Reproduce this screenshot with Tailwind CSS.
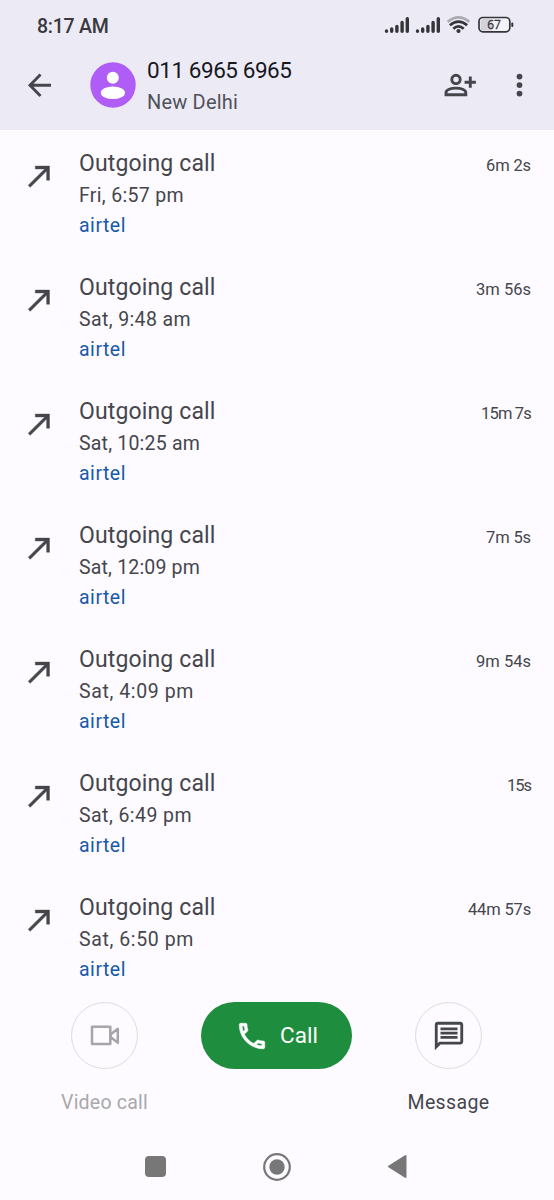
<!DOCTYPE html>
<html lang="en"><head><meta charset="utf-8"><meta name="viewport" content="width=device-width"><title>Call history</title>
<script src="https://cdn.jsdelivr.net/npm/@tailwindcss/browser@4"></script></head>
<body class="w-[554px] h-[1200px] overflow-hidden bg-[#fdfbff] font-['Roboto',sans-serif] text-[#45464c] flex flex-col">
<header class="h-[130px] shrink-0 bg-[#ecebf5] flex flex-col">
  <div class="h-[50px] flex items-center justify-between pl-[37px] pr-[40px]">
    <span class="mt-[3px] text-[19.5px] leading-6 text-[#38383e] font-medium whitespace-nowrap" data-w="71.500">8:17 AM</span>
    <svg class="w-[130px] h-[20px]" viewBox="384 15 130 20" fill="none">
      <g stroke="#34343b" stroke-width="3.4" stroke-linecap="round"><path d="M386.500 31v.3M391.700 29v2.300M396.900 26.500v4.800M402.100 22.500v8.800M407.300 18.800v12.500M417.500 31v.3M422.700 29v2.300M427.900 26.500v4.800M433.100 22.500v8.800M438.300 18.800v12.500"/></g>
      <g stroke-width="2.700"><path stroke="#aaa9b2" d="M447.700 21.900q10.800-9 21.600 0"/><path stroke="#34343b" d="M449.900 25.300q8.600-7.500 17.200 0M453.300 28.700q5.200-4.600 10.400 0"/></g><circle cx="458.500" cy="31" r="2.100" fill="#34343b"/>
      <rect x="479" y="17.500" width="30.800" height="14.300" rx="4" fill="#f4f4f8" stroke="#34343b" stroke-width="1.700"/><path fill="#d3d2d9" d="M483 19h9.500v11.400H483q-2.500 0-2.500-2.500v-6.400q0-2.500 2.500-2.500z"/><rect x="511.300" y="22.500" width="2" height="4.500" rx="1" fill="#34343b"/>
      <text x="494" y="29" text-anchor="middle" font-family="Open Sans" font-size="12" font-weight="400" fill="#34343b" stroke="#34343b" stroke-width=".3">67</text>
    </svg>
  </div>
  <div class="h-[70px] flex items-center">
    <svg class="ml-[27px] w-[25px] h-[26px]" viewBox="27 72 25 26" fill="none" stroke="#45464c" stroke-width="2.900"><path d="M51 85.200H31M40.500 74.500 30 85.200l10.500 10.700"/></svg>
    <svg class="ml-[38px] w-[46px] h-[46px]" viewBox="90 62 46 46"><circle cx="113" cy="85" r="22.700" fill="#b05cf7"/><circle cx="112.800" cy="77.800" r="6" fill="#fff"/><ellipse cx="112.900" cy="92.800" rx="12.100" ry="6.300" fill="#fff"/></svg>
    <div class="ml-[11px] flex flex-col mt-[2px]">
      <span class="self-start whitespace-nowrap text-[22.500px] leading-8 text-[#17181e]" data-w="144.500">011 6965 6965</span>
      <span class="self-start whitespace-nowrap text-[20px] leading-8 text-[#50515a]" data-w="91">New Delhi</span>
    </div>
    <svg class="ml-auto w-[34px] h-[26px]" viewBox="443 72 34 26" fill="none" stroke="#45464c" stroke-width="2.900"><circle cx="456" cy="79.400" r="4.200"/><path d="M446 94.700v-2c0-6.100 19.800-6.100 19.800 0v2zM470.300 76.500v11.300M464.600 82.200h11.300"/></svg>
    <svg class="ml-[38px] mr-[31px] w-[8px] h-[26px]" viewBox="515.500 72 8 26" fill="#45464c"><circle cx="520" cy="76.600" r="2.900"/><circle cx="520" cy="85.100" r="2.900"/><circle cx="520" cy="93.600" r="2.900"/></svg>
  </div>
</header>
<main id="calls" class="h-[868px] shrink-0 flex flex-col"></main>
<footer class="flex-1 flex flex-col">
  <div class="flex h-[124px] pt-[4px]">
    <div class="ml-[44px] w-[121px] flex flex-col items-center">
      <div class="w-[67px] h-[67px] rounded-full border border-[#dedce3] flex items-center justify-center">
        <svg class="w-[30px] h-[22px]" viewBox="90 1025 30 22" fill="none" stroke="#a6a5aa" stroke-width="2.500" stroke-linejoin="round"><path d="M92 1026.800h18.300v17.200H92zM110.800 1034.200l7-5.500v14l-7-5.500z"/></svg>
      </div>
      <span class="mt-[18px] whitespace-nowrap text-[19.500px] leading-8 text-[#a9a8ad]" data-w="87">Video call</span>
    </div>
    <div class="ml-[36px] w-[151px] h-[67px] rounded-full bg-[#1f8d3e] flex items-center text-white">
      <svg class="ml-[34px] w-[34px] h-[34px]" viewBox="0 0 24 24" fill="#fff" stroke="#fff" stroke-width=".35"><path d="M6.540 5c.06.890.210 1.760.450 2.590l-1.200 1.200c-.410-1.200-.670-2.470-.760-3.790h1.510m9.860 12.020c.850.240 1.720.390 2.600.450v1.490c-1.320-.090-2.590-.350-3.800-.750l1.200-1.190M7.500 3H4c-.550 0-1 .450-1 1 0 9.390 7.610 17 17 17 .550 0 1-.450 1-1v-3.490c0-.550-.450-1-1-1-1.240 0-2.450-.200-3.570-.570-.100-.040-.210-.050-.310-.050-.260 0-.510.100-.710.290l-2.200 2.200c-2.830-1.450-5.150-3.760-6.590-6.590l2.200-2.200c.280-.280.360-.670.250-1.020C8.700 6.450 8.500 5.250 8.500 4c0-.550-.450-1-1-1z"/></svg>
      <span class="ml-[11px] -mt-px whitespace-nowrap text-[22.500px] leading-8" data-w="38">Call</span>
    </div>
    <div class="ml-[36px] w-[121px] flex flex-col items-center">
      <div class="w-[67px] h-[67px] rounded-full border border-[#dedce3] flex items-center justify-center">
        <svg class="w-[34px] h-[34px]" viewBox="0 0 24 24" fill="#45464c"><path d="M4 4h16v12H5.170L4 17.170V4m0-2c-1.100 0-1.990.900-1.990 2L2 22l4-4h14c1.100 0 2-.900 2-2V4c0-1.100-.900-2-2-2H4zm2 10h12v2H6v-2zm0-3h12v2H6V9zm0-3h12v2H6V6z"/></svg>
      </div>
      <span class="mt-[18px] whitespace-nowrap text-[19.500px] leading-8" data-w="82">Message</span>
    </div>
  </div>
  <nav class="h-[78px] flex items-center pt-[11px]">
    <div class="ml-[145px] w-[21px] h-[21px] rounded-[4px] bg-[#777]"></div>
    <svg class="ml-[97px] w-[28px] h-[28px]" viewBox="0 0 28 28"><circle cx="14" cy="14" r="12.800" fill="none" stroke="#777" stroke-width="2.200"/><circle cx="14" cy="14" r="7.700" fill="#777"/></svg>
    <svg class="ml-[96px] w-[20px] h-[25px]" viewBox="0 0 20 25"><path d="M2 12.500 18.500 2v21z" fill="#777" stroke="#777" stroke-width="2" stroke-linejoin="round"/></svg>
  </nav>
</footer>
<script>
const calls=[["Fri, 6:57 pm","6m 2s",105,45],["Sat, 9:48 am","3m 56s",112,55],["Sat, 10:25 am","15m 7s",121,50],["Sat, 12:09 pm","7m 5s",121,45],["Sat, 4:09 pm","9m 54s",115,55],["Sat, 6:49 pm","15s",113,24],["Sat, 6:50 pm","44m 57s",115,63]];
document.getElementById("calls").innerHTML=calls.map(c=>`
<section class="h-[124px] flex items-start">
  <svg class="ml-[23px] mt-[29px] w-[34px] h-[34px]" viewBox="0.3 0 24 24" fill="#45464c" stroke="#45464c" stroke-width=".3"><path d="M9 5v2h6.590L4 18.590 5.410 20 17 8.410V15h2V5z"/></svg>
  <div class="ml-[22px] mt-[18px] flex flex-col items-start whitespace-nowrap">
    <span class="text-[23px] leading-8" data-w="136.500">Outgoing call</span>
    <span class="text-[19.500px] leading-8" data-w="${c[2]}">${c[0]}</span>
    <span class="text-[19.500px] leading-7 text-[#1859a9]" data-w="47">airtel</span>
  </div>
  <span class="ml-auto mr-[23px] mt-[20px] text-[16.500px] leading-8 whitespace-nowrap" data-w="${c[3]}">${c[1]}</span>
</section>`).join("");
// Track each label so that it fills its intended width.
function fit(){
  document.querySelectorAll("[data-w]").forEach(e=>{
    e.style.letterSpacing="0px";
    const gap=(Number(e.dataset.w)-e.getBoundingClientRect().width)/e.textContent.length;
    e.style.letterSpacing=gap+"px";
  });
}
fit();
window.addEventListener("load",()=>{fit();requestAnimationFrame(fit);});
document.fonts.ready.then(fit);
</script>
</body></html>
